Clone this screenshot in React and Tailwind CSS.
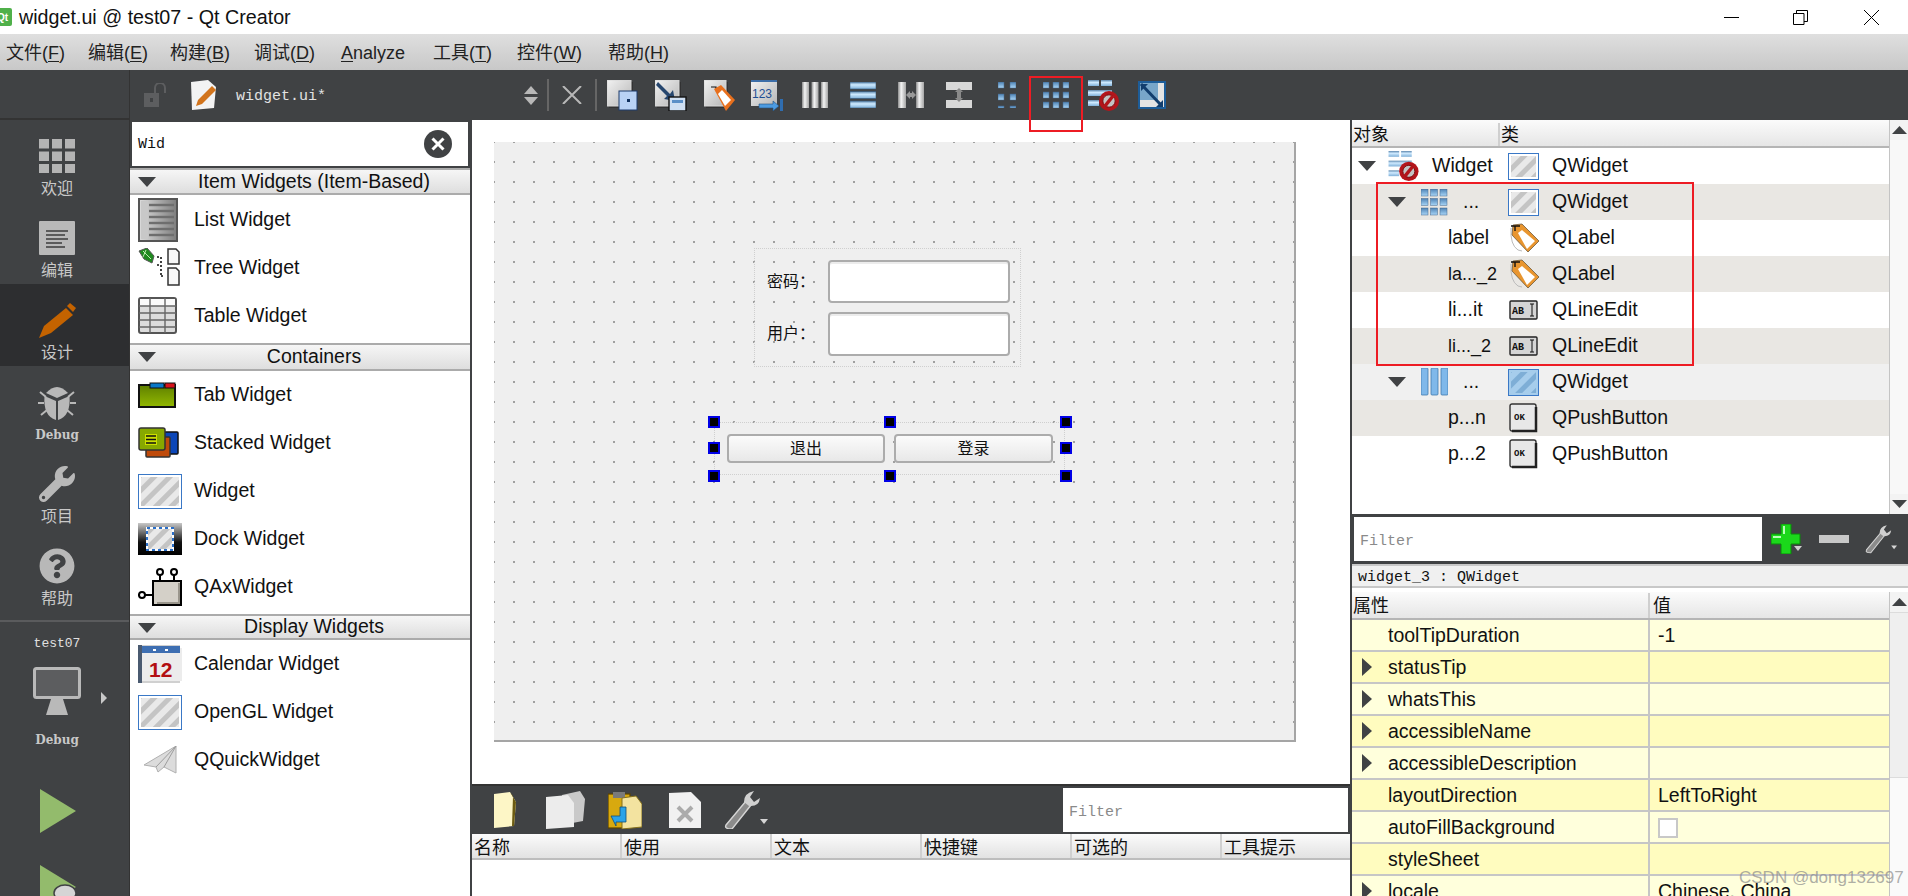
import React from "react";
import { FaWrench, FaQuestionCircle } from "react-icons/fa";

const SANS = "[font-family:'Liberation_Sans','Noto_Sans_CJK_SC',sans-serif]";

// shared gradients for the little toolbar pictures
const Defs = () => (
  <svg className="absolute h-0 w-0">
    <defs>
      <linearGradient id="barV" x1="0" x2="1" y1="0" y2="0">
        <stop offset="0" stopColor="#8d8d8d" />
        <stop offset="0.4" stopColor="#f4f4f4" />
        <stop offset="1" stopColor="#a5a5a5" />
      </linearGradient>
      <linearGradient id="barH" x1="0" x2="0" y1="0" y2="1">
        <stop offset="0" stopColor="#5d87ad" />
        <stop offset="0.4" stopColor="#cfeaff" />
        <stop offset="1" stopColor="#7fb0d8" />
      </linearGradient>
      <linearGradient id="tile" x1="0" x2="0" y1="0" y2="1">
        <stop offset="0" stopColor="#4f83b5" />
        <stop offset="1" stopColor="#a9d6f7" />
      </linearGradient>
      <linearGradient id="page" x1="0" x2="1" y1="0" y2="1">
        <stop offset="0" stopColor="#f2f2f2" />
        <stop offset="1" stopColor="#b5b5b5" />
      </linearGradient>
      <linearGradient id="greenG" x1="0" x2="0" y1="0" y2="1">
        <stop offset="0" stopColor="#5f8000" />
        <stop offset="1" stopColor="#92b800" />
      </linearGradient>
      <linearGradient id="listG" x1="0" x2="1" y1="0" y2="0">
        <stop offset="0" stopColor="#dcdcdc" />
        <stop offset="1" stopColor="#7d7d7d" />
      </linearGradient>
      <linearGradient id="dockG" x1="0" x2="0" y1="0" y2="1">
        <stop offset="0" stopColor="#c8c8c8" />
        <stop offset="0.6" stopColor="#111" />
        <stop offset="1" stopColor="#000" />
      </linearGradient>
      <pattern id="stripes" width="11" height="11" patternUnits="userSpaceOnUse" patternTransform="rotate(45)">
        <rect width="11" height="11" fill="#e9e9e9" />
        <rect width="5" height="11" fill="#c4c4c4" />
      </pattern>
      <pattern id="stripesBlue" width="11" height="11" patternUnits="userSpaceOnUse" patternTransform="rotate(45)">
        <rect width="11" height="11" fill="#a6cdec" />
        <rect width="5" height="11" fill="#7eaed6" />
      </pattern>
    </defs>
  </svg>
);

const Ico = ({ w, h, vb, children, className = "" }) => (
  <svg width={w} height={h} viewBox={vb || `0 0 ${w} ${h}`} className={`shrink-0 ${className}`}>
    {children}
  </svg>
);

// ---- left rail icons
const GridRail = () => (
  <Ico w={36} h={34}>
    {[0, 13, 26].map((x) =>
      [0, 12.5, 25].map((y) => <rect key={`${x}${y}`} x={x} y={y} width="10" height="9.5" fill="#b4b4b4" />)
    )}
  </Ico>
);
const EditRail = () => (
  <Ico w={36} h={34}>
    <rect width="36" height="34" rx="1" fill="#b9b9b9" />
    <path d="M7 10h22M7 14h19M7 18h22M7 22h16M7 26h19" stroke="#3c3c3c" strokeWidth="1.6" />
  </Ico>
);
const PencilRail = () => (
  <Ico w={37} h={35}>
    <path d="M0 35 L5 23 L27 5 L34 12 L12 30 Z" fill="#c46300" />
    <path d="M28 3 L31 0 L37 5 L34 9 Z" fill="#c46300" />
  </Ico>
);
const BugRail = () => (
  <Ico w={38} h={36}>
    <path d="M2 8l6 5M36 8l-6 5M0 19h6M38 19h-6M3 31l6-5M35 31l-6-5" stroke="#b8b8b8" strokeWidth="2" />
    <path d="M8 9 Q19 -3 30 9 L19 14 Z" fill="#b8b8b8" />
    <path d="M6.5 12 L18 17 V36 Q5 32 6.5 12 Z" fill="#b8b8b8" />
    <path d="M31.5 12 L20 17 V36 Q33 32 31.5 12 Z" fill="#b8b8b8" />
  </Ico>
);
const MonitorRail = () => (
  <Ico w={48} h={48}>
    <rect x="1.5" y="1.5" width="45" height="29" rx="2" fill="#5c5d5f" stroke="#b9b9b9" strokeWidth="3" />
    <path d="M18 32h12l5 16H13z" fill="#b9b9b9" />
  </Ico>
);

// ---- widget box icons
const ListIcon = () => (
  <Ico w={40} h={44}>
    <rect x="1" y="1" width="38" height="42" fill="url(#listG)" stroke="#555" strokeWidth="2" />
    <rect x="3" y="3" width="7" height="38" fill="#c8c8c8" />
    {[7, 13, 19, 25, 31, 37].map((y) => (
      <path key={y} d={`M11 ${y}h25`} stroke="#6e6e6e" strokeWidth="2.4" />
    ))}
  </Ico>
);
const TreeIcon = () => (
  <Ico w={44} h={40}>
    <path d="M1 3 L9 0 L16 8 L14 15 L6 11 Z" fill="#1f8a1f" stroke="#555" strokeWidth="1" />
    <path d="M5 3l8 8M8 2l-3 7" stroke="#bdeab0" strokeWidth="1" />
    <path d="M23 9v20M19 9h4M19 17h4M23 28h4" stroke="#111" strokeWidth="1.6" strokeDasharray="2 2" />
    <path d="M30 1h8l3 3v12H30z" fill="#f7f7f7" stroke="#333" strokeWidth="1.5" />
    <path d="M30 20h8l3 3v14H30z" fill="#f7f7f7" stroke="#333" strokeWidth="1.5" />
  </Ico>
);
const TableIcon = () => (
  <Ico w={40} h={38}>
    <rect x="1" y="1" width="37" height="35" rx="2" fill="#dcdcdc" stroke="#555" strokeWidth="2" />
    <rect x="2" y="2" width="35" height="7" fill="#fafafa" />
    <path d="M1 9h37M1 16h37M1 23h37M1 30h37M12 1v35M27 1v35" stroke="#666" strokeWidth="1.4" />
  </Ico>
);
const TabIcon = () => (
  <Ico w={39} h={26}>
    <rect x="1" y="3" width="36" height="22" fill="url(#greenG)" stroke="#111" strokeWidth="2" />
    <rect x="12" y="1" width="14" height="5" fill="#0a78c8" stroke="#111" strokeWidth="1" />
    <rect x="27" y="1" width="10" height="5" fill="#d8141c" stroke="#111" strokeWidth="1" />
  </Ico>
);
const StackedIcon = () => (
  <Ico w={42} h={32}>
    <rect x="26" y="5" width="14" height="22" rx="1" fill="#0b46b8" stroke="#111" strokeWidth="1.5" />
    <rect x="8" y="10" width="24" height="20" rx="1" fill="#bf4a0a" stroke="#333" strokeWidth="1.5" />
    <rect x="1" y="1" width="26" height="22" rx="2" fill="#87a800" stroke="#333" strokeWidth="1.5" />
    <rect x="7" y="7" width="12" height="11" fill="#cde000" />
    <path d="M8 9h10M8 12.5h10M8 16h10" stroke="#111" strokeWidth="1.4" />
  </Ico>
);
const WidgetIcon = ({ w = 44, h = 35, blue = false }) => (
  <Ico w={w} h={h}>
    <rect x="1" y="1" width={w - 2} height={h - 2} fill={blue ? "url(#stripesBlue)" : "url(#stripes)"} stroke="#3a78c6" strokeWidth="2" />
    <rect x="2" y="2" width={w - 4} height={h - 4} fill="none" stroke={blue ? "#a6cdec" : "#fff"} strokeWidth="2" />
  </Ico>
);
const DockIcon = () => (
  <Ico w={44} h={32}>
    <rect width="44" height="32" fill="url(#dockG)" />
    <rect x="9" y="5" width="26" height="22" fill="url(#stripes)" stroke="#fff" strokeWidth="2" />
    <rect x="9" y="5" width="26" height="22" fill="none" stroke="#2a6fc9" strokeWidth="2" strokeDasharray="3 3" />
  </Ico>
);
const QAxIcon = () => (
  <Ico w={44} h={38}>
    <rect x="15" y="13" width="28" height="24" fill="#d4d0c8" stroke="#000" strokeWidth="2" />
    <path d="M41 15v20H19" stroke="#9a968c" strokeWidth="2" fill="none" />
    <path d="M22 5v8M36 5v8M0 27h15" stroke="#000" strokeWidth="2" />
    <circle cx="22" cy="4" r="3" fill="#fff" stroke="#000" strokeWidth="2" />
    <circle cx="36" cy="4" r="3" fill="#fff" stroke="#000" strokeWidth="2" />
    <circle cx="4" cy="27" r="3" fill="#fff" stroke="#000" strokeWidth="2" />
  </Ico>
);
const CalendarIcon = () => (
  <Ico w={44} h={38}>
    <rect x="0" y="0" width="42" height="38" fill="#d0d0d0" />
    <rect x="4" y="3" width="40" height="33" fill="#ececec" />
    <rect x="0" y="0" width="4" height="38" fill="#4a5a70" />
    <rect x="4" y="1" width="38" height="7" fill="#3e6fb2" />
    <path d="M15 5h3M27 5h3" stroke="#fff" strokeWidth="2" />
    <text x="11" y="32" fontSize="21" fontWeight="700" fill="#b30f12" fontFamily="Liberation Sans">12</text>
  </Ico>
);
const PlaneIcon = () => (
  <Ico w={34} h={28} className="ml-[6px]">
    <path d="M0 19 L32 0 L32 27 L20 21 L14 26 L12 21 Z" fill="#dcdcdc" stroke="#b0b0b0" strokeWidth="1" />
    <path d="M32 0 L12 21 M32 0 L20 21" stroke="#9c9c9c" strokeWidth="1" />
  </Ico>
);

// ---- designer toolbar icons
const PageBack = ({ w = 24, h = 26 }) => (
  <>
    <rect x="2" y="2" width={w} height={h} fill="#2c2c2c" opacity="0.7" />
    <rect x="0" y="0" width={w} height={h} fill="url(#page)" stroke="#d8d8d8" strokeWidth="1" />
  </>
);
const ToolEditWidgets = () => (
  <Ico w={32} h={31}>
    <PageBack />
    <rect x="12" y="11" width="18" height="19" fill="#b9d2f5" stroke="#1d3a6b" strokeWidth="1" />
    <rect x="20" y="19" width="3" height="3" fill="#10315f" />
  </Ico>
);
const ToolSignals = () => (
  <Ico w={32} h={31}>
    <PageBack />
    <path d="M3 2 L15 14 L18 10 L20 21 L9 19 L12 16 L1 5 Z" fill="#26466e" />
    <rect x="14" y="17" width="17" height="14" fill="#cfdff2" stroke="#111" strokeWidth="1.4" />
    <rect x="17" y="20" width="11" height="3" fill="#5b8fc7" />
  </Ico>
);
const ToolBuddies = () => (
  <Ico w={31} h={31}>
    <PageBack w={22} />
    <path d="M7 7h5v3" stroke="#111" strokeWidth="1.2" fill="none" />
    <path d="M10 9 L17 5 L31 20 L22 31 Z" fill="#e8701d" />
    <path d="M14 14 L18 10 L27 20 L21 26 Z" fill="#fff" />
  </Ico>
);
const ToolTabOrder = () => (
  <Ico w={32} h={31}>
    <rect x="0" y="0" width="26" height="26" fill="url(#page)" />
    <rect x="0" y="0" width="26" height="2" fill="#3d6ea8" />
    <text x="1" y="18" fontSize="12" fill="#1f4f94" fontFamily="Liberation Sans">123</text>
    <path d="M8 24h14v-3l6 5-6 5v-3H8z" fill="#4d9be0" stroke="#22517f" strokeWidth="0.6" />
    <rect x="29" y="19" width="3" height="12" fill="#2f6db0" />
  </Ico>
);
const ToolHBox = () => (
  <Ico w={26} h={26}>
    {[0, 9.5, 19].map((x) => <rect key={x} x={x} y="0" width="7" height="26" fill="url(#barV)" />)}
  </Ico>
);
const ToolVBox = () => (
  <Ico w={26} h={26}>
    {[0, 9.5, 19].map((y) => <rect key={y} x="0" y={y} width="26" height="7" fill="url(#barH)" stroke="#35577a" strokeWidth="0.6" />)}
  </Ico>
);
const ToolHSplit = () => (
  <Ico w={26} h={26}>
    <rect x="0" width="8" height="26" fill="url(#barV)" />
    <rect x="18" width="8" height="26" fill="url(#barV)" />
    <path d="M8 13l4-4v2h2V9l4 4-4 4v-2h-2v2z" fill="#999" />
  </Ico>
);
const ToolVSplit = () => (
  <Ico w={26} h={26}>
    <rect y="0" width="26" height="8" fill="#d8d8d8" />
    <rect y="18" width="26" height="8" fill="#d8d8d8" />
    <path d="M13 6l4 4h-2v6h2l-4 4-4-4h2v-6H9z" fill="#8a8a8a" />
  </Ico>
);
const Tiles = ({ cols, rows, size = 6, gap = 3, w, h }) => (
  <Ico w={w} h={h}>
    {Array.from({ length: rows }).flatMap((_, r) =>
      Array.from({ length: cols }).map((_, c) => (
        <rect key={`${r}-${c}`} x={c * (size + gap)} y={r * (size + gap)} width={size} height={size} fill="url(#tile)" stroke="#46678c" strokeWidth="0.5" />
      ))
    )}
  </Ico>
);
const NoSign = ({ cx, cy, r }) => (
  <>
    <circle cx={cx} cy={cy} r={r} fill="#b3151b" />
    <circle cx={cx} cy={cy} r={r * 0.62} fill="#c4c4c4" stroke="#7a0d10" strokeWidth="1" />
    <path d={`M${cx - r * 0.4} ${cy + r * 0.5} L${cx + r * 0.4} ${cy - r * 0.5}`} stroke="#b3151b" strokeWidth={r * 0.35} />
  </>
);
const ToolBreak = ({ w = 32, h = 31 }) => (
  <Ico w={w} h={h} vb="0 0 32 31">
    <rect x="0" y="0" width="11" height="6" fill="url(#barH)" />
    <rect x="13" y="0" width="11" height="6" fill="url(#barH)" />
    <rect x="0" y="10" width="24" height="6" fill="url(#barH)" />
    <rect x="0" y="20" width="11" height="6" fill="url(#barH)" />
    <NoSign cx={21} cy={21} r={10} />
  </Ico>
);
const ToolAdjust = () => (
  <Ico w={28} h={29}>
    <rect x="1" y="1" width="26" height="26" fill="#e4e4e4" stroke="#1d5d99" strokeWidth="2" />
    <rect x="2" y="2" width="18" height="17" fill="#78a6c9" />
    <path d="M3 3l20 21" stroke="#123e6e" strokeWidth="3" />
    <path d="M3 3h7L3 10zM25 26h-7l7-7z" fill="#123e6e" />
  </Ico>
);
const LockIcon = () => (
  <Ico w={24} h={24}>
    <rect x="0" y="10" width="15" height="14" fill="#5d5e60" />
    <rect x="6" y="15" width="3" height="4" fill="#404244" />
    <path d="M11 10V5a5 5 0 0 1 10 0v5" fill="none" stroke="#5d5e60" strokeWidth="2" />
  </Ico>
);
const FileEditIcon = () => (
  <Ico w={27} h={30}>
    <path d="M0 2 L17 0 L25 7 L23 28 L1 30 Z" fill="#f3f3f3" />
    <path d="M5 26 L7 20 L21 6 L25 10 L11 24 Z" fill="#d2741c" />
  </Ico>
);

// ---- tree icons
const LayoutGridSmall = () => <Tiles cols={3} rows={3} size={7} gap={2.5} w={27} h={27} />;
const LayoutBars = () => (
  <Ico w={27} h={28}>
    {[0, 10, 20].map((x) => <rect key={x} x={x} y="0" width="7" height="27" rx="1" fill="#7fb8ea" stroke="#3f78ad" strokeWidth="0.8" />)}
  </Ico>
);
const TagIcon = () => (
  <Ico w={31} h={30}>
    <path d="M3 5 Q2 22 10 27 L14 28" fill="none" stroke="#bbb" strokeWidth="1" />
    <path d="M5 2 L14 1 L31 18 L20 29 L4 12 Z" fill="#e8952f" stroke="#6c5a3f" strokeWidth="0.8" />
    <path d="M10 10 L14 7 L27 18 L19 26 Z" fill="#fff" />
    <path d="M3 3h9M7 3v5" stroke="#111" strokeWidth="1.4" />
  </Ico>
);
const LineEditIcon = () => (
  <Ico w={29} h={20}>
    <rect x="1" y="1" width="27" height="18" rx="1" fill="#d5d5d5" stroke="#222" strokeWidth="1.4" />
    <text x="3" y="14" fontSize="10" fontWeight="700" fill="#111" fontFamily="Liberation Mono">AB</text>
    <path d="M21 4h4M23 4v12M21 16h4" stroke="#111" strokeWidth="1" />
  </Ico>
);
const ButtonIcon = () => (
  <Ico w={29} h={30}>
    <rect x="1" y="1" width="26" height="27" rx="2" fill="#e8e8e8" stroke="#333" strokeWidth="1.4" />
    <path d="M27 4v24H3" stroke="#222" strokeWidth="2.5" fill="none" />
    <text x="5" y="17" fontSize="9" fontWeight="700" fill="#111" fontFamily="Liberation Mono">OK</text>
  </Ico>
);

// ---- action editor icons
const NewPage = () => (
  <Ico w={22} h={36}>
    <path d="M0 2 L16 0 L22 10 L20 34 L0 36 Z" fill="#fdf6c6" />
    <path d="M16 0 L22 10 L20 34 L18 34 L19 4 Z" fill="#6b5a10" />
  </Ico>
);
const CopyPages = () => (
  <Ico w={39} h={38}>
    <path d="M16 4 L34 0 L39 8 L37 30 L16 34 Z" fill="#c9c9c9" />
    <path d="M0 6 L22 4 L28 12 L28 36 L0 38 Z" fill="#ececec" />
  </Ico>
);
const PastePage = () => (
  <Ico w={34} h={37}>
    <rect x="0" y="2" width="22" height="34" fill="#d8a90f" stroke="#5b4300" strokeWidth="1.2" />
    <rect x="5" y="0" width="12" height="6" fill="#7a7a7a" />
    <path d="M14 6 L28 4 L34 12 L34 35 L14 37 Z" fill="#f3e3a0" stroke="#85701d" strokeWidth="1" />
    <path d="M3 24h9v-9h6v15H8v4z" fill="#2aa3e8" stroke="#0f4e7a" strokeWidth="0.8" />
  </Ico>
);
const DeletePage = () => (
  <Ico w={32} h={36}>
    <path d="M0 1 L22 0 L32 10 L32 36 L0 36 Z" fill="#f1f1f1" />
    <path d="M9 15l14 14M23 15L9 29" stroke="#ababab" strokeWidth="4" />
  </Ico>
);
const ToolWrench = ({ w = 44, h = 38 }) => (
  <Ico w={w} h={h} vb="0 0 44 38">
    <path d="M2 34 L22 10 L27 14 L8 38 Q0 38 2 34Z" fill="#8b8b8b" stroke="#d5d5d5" strokeWidth="1.4" />
    <path d="M20 11 Q20 2 30 0 L26 6 L30 11 L36 7 Q35 16 25 15Z" fill="#d0d0d0" />
    <path d="M36 28h8l-4 5z" fill="#d5d5d5" />
  </Ico>
);
const PlusIcon = () => (
  <Ico w={31} h={30}>
    <path d="M10 0h10v10h9v10h-9v10H10V20H0V10h10z" fill="#1bd81b" stroke="#0a8a0a" strokeWidth="1" />
    <path d="M12 2h2v8h-2zM2 12h8v2H2z" fill="#b8ffb8" />
    <path d="M23 22h8l-4 5z" fill="#cfcfcf" />
  </Ico>
);

const ArrowDown = ({ className = "" }) => (
  <Ico w={18} h={10} className={className}>
    <path d="M0 0h18L9 10z" fill="#404244" />
  </Ico>
);
const ArrowRight = () => (
  <Ico w={10} h={18}>
    <path d="M0 0l10 9-10 9z" fill="#404244" />
  </Ico>
);

const menus = [
  { a: "文件(", b: "F", c: ")", w: "w-[82px]" },
  { a: "编辑(", b: "E", c: ")", w: "w-[82px]" },
  { a: "构建(", b: "B", c: ")", w: "w-[84px]" },
  { a: "调试(", b: "D", c: ")", w: "w-[87px]" },
  { a: "", b: "A", c: "nalyze", w: "w-[92px]" },
  { a: "工具(", b: "T", c: ")", w: "w-[84px]" },
  { a: "控件(", b: "W", c: ")", w: "w-[91px]" },
  { a: "帮助(", b: "H", c: ")", w: "w-[82px]" },
];

const railItems = [
  { icon: <GridRail />, label: "欢迎" },
  { icon: <EditRail />, label: "编辑" },
  { icon: <PencilRail />, label: "设计", active: true },
  { icon: <BugRail />, label: "Debug", latin: true },
  { icon: <FaWrench className="h-[36px] w-[38px] text-[#b8b8b8]" />, label: "项目" },
  { icon: <FaQuestionCircle className="h-[36px] w-[38px] text-[#b8b8b8]" />, label: "帮助" },
];

const boxSections = [
  {
    title: "Item Widgets (Item-Based)",
    head: "h-[27px]",
    pad: "pt-[1px] pb-[3px]",
    items: [
      ["List Widget", <ListIcon />],
      ["Tree Widget", <TreeIcon />],
      ["Table Widget", <TableIcon />],
    ],
  },
  {
    title: "Containers",
    head: "h-[28px]",
    pad: "pb-[3px]",
    items: [
      ["Tab Widget", <TabIcon />],
      ["Stacked Widget", <StackedIcon />],
      ["Widget", <WidgetIcon />],
      ["Dock Widget", <DockIcon />],
      ["QAxWidget", <QAxIcon />],
    ],
  },
  {
    title: "Display Widgets",
    head: "h-[26px]",
    pad: "pb-[2px]",
    items: [
      ["Calendar Widget", <CalendarIcon />],
      ["OpenGL Widget", <WidgetIcon />],
      ["QQuickWidget", <PlaneIcon />],
    ],
  },
];

const treeRows = [
  { arrow: 6, icon: <ToolBreak w={32} h={30} />, name: "Widget", cls: <WidgetIcon w={31} h={27} />, type: "QWidget" },
  { alt: true, arrow: 36, icon: <LayoutGridSmall />, name: "...", dots: true, cls: <WidgetIcon w={31} h={27} />, type: "QWidget" },
  { name: "label", left: 96, cls: <TagIcon />, type: "QLabel" },
  { alt: true, name: "la..._2", left: 96, narrow: true, cls: <TagIcon />, type: "QLabel" },
  { name: "li...it", left: 96, cls: <LineEditIcon />, type: "QLineEdit" },
  { alt: true, name: "li..._2", left: 96, narrow: true, cls: <LineEditIcon />, type: "QLineEdit" },
  { sel: true, arrow: 36, icon: <LayoutBars />, name: "...", dots: true, cls: <WidgetIcon w={31} h={27} blue />, type: "QWidget" },
  { alt: true, name: "p...n", left: 96, cls: <ButtonIcon />, type: "QPushButton" },
  { name: "p...2", left: 96, cls: <ButtonIcon />, type: "QPushButton" },
];

const props = [
  { name: "toolTipDuration", value: "-1" },
  { name: "statusTip", arrow: true, strong: true },
  { name: "whatsThis", arrow: true },
  { name: "accessibleName", arrow: true, strong: true },
  { name: "accessibleDescription", arrow: true },
  { name: "layoutDirection", value: "LeftToRight", strong: true },
  { name: "autoFillBackground", check: true },
  { name: "styleSheet", strong: true },
  { name: "locale", arrow: true, value: "Chinese, China" },
];

const actionCols = ["名称", "使用", "文本", "快捷键", "可选的", "工具提示"];

const Handle = ({ x, y }) => (
  <div className="absolute h-[12px] w-[12px] border-[2px] border-[#0000e6] bg-black" style={{ left: x, top: y }} />
);

const ScrollBtn = ({ down }) => (
  <div className="flex h-[20px] items-center justify-center bg-[#f3f3f3]">
    <svg width="15" height="8" viewBox="0 0 15 8">
      <path d={down ? "M0 0h15L7.5 8z" : "M7.5 0L15 8H0z"} fill="#404244" />
    </svg>
  </div>
);

export default function App() {
  return (
    <div className={`relative flex h-[896px] w-[1908px] flex-col overflow-hidden bg-white text-[#111] ${SANS}`}>
      <Defs />

      {/* title bar */}
      <div className="flex h-[34px] items-center bg-white">
        <div className="flex h-[18px] w-[12px] items-center overflow-hidden rounded-r-[2px] bg-[#4fb04a] text-[10px] font-bold text-white">
          <span className="-ml-[3px]">Qt</span>
        </div>
        <span className="ml-[7px] pt-[2px] text-[19.7px] leading-none">widget.ui @ test07 - Qt Creator</span>
        <div className="ml-auto flex items-center">
          <svg width="15" height="15" viewBox="0 0 15 15" className="mr-[54px]">
            <path d="M0 7.5h15" stroke="#000" strokeWidth="1" />
          </svg>
          <svg width="15" height="15" viewBox="0 0 15 15" className="mr-[56px]">
            <path d="M0.5 3.5h10.5v11H0.5zM3.5 3.5V0.5h11v11H11" fill="none" stroke="#000" strokeWidth="1" />
          </svg>
          <svg width="15" height="15" viewBox="0 0 15 15" className="mr-[29px]">
            <path d="M0 0l15 15M15 0L0 15" stroke="#000" strokeWidth="1" />
          </svg>
        </div>
      </div>

      {/* menu bar */}
      <div className="flex h-[36px] items-center bg-gradient-to-b from-[#dfdfdf] to-[#c8c8c8] pl-[6px] pt-[2px] text-[18px]">
        {menus.map((m) => (
          <span key={m.b} className={`${m.w} leading-none text-[#222]`}>
            {m.a}
            <span className="underline underline-offset-2">{m.b}</span>
            {m.c}
          </span>
        ))}
      </div>

      <div className="flex min-h-0 flex-1 bg-[#404244]">
        {/* mode rail */}
        <div className="flex w-[130px] shrink-0 flex-col items-stretch border-r border-[#333] text-[#c8c8c8]">
          <div className="h-[50px] shrink-0 border-b-[2px] border-[#333]" />
          {railItems.map((it) => (
            <div key={it.label} className={`flex h-[82px] shrink-0 flex-col items-center pr-[15px] pt-[18px] ${it.active ? "bg-[#2d2e30]" : ""}`}>
              <div className="flex h-[36px] items-center">{it.icon}</div>
              <span className={it.latin ? "mt-[5px] text-[12px] font-bold leading-[20px] [font-family:'DejaVu_Serif',serif]" : "mt-[5px] text-[16px] leading-[20px]"}>
                {it.label}
              </span>
            </div>
          ))}
          <div className="mt-[8px] h-[2px] shrink-0 bg-[#5a5b5d]" />
          <div className="mt-[14px] pr-[15px] text-center text-[13px] leading-[16px] text-[#e0e0e0] [font-family:'Liberation_Mono',monospace]">test07</div>
          <div className="relative mt-[15px] flex justify-center pr-[15px]">
            <MonitorRail />
            <svg width="6" height="12" viewBox="0 0 6 12" className="absolute left-[101px] top-[25px]">
              <path d="M0 0l6 6-6 6z" fill="#c8c8c8" />
            </svg>
          </div>
          <div className="mt-[15px] pr-[15px] text-center text-[12px] font-bold leading-[20px] [font-family:'DejaVu_Serif',serif]">Debug</div>
          <div className="ml-[40px] mt-[39px]">
            <svg width="36" height="44" viewBox="0 0 36 44">
              <path d="M0 0l36 22L0 44z" fill="#93bb6c" />
            </svg>
          </div>
          <div className="relative ml-[40px] mt-[32px]">
            <svg width="36" height="44" viewBox="0 0 36 44">
              <path d="M0 0l36 22L0 44z" fill="#93bb6c" />
            </svg>
            <svg width="26" height="14" viewBox="0 0 26 14" className="absolute left-[12px] top-[19px]">
              <ellipse cx="13" cy="9" rx="11" ry="8" fill="#d5d5d5" stroke="#404244" strokeWidth="1.5" />
            </svg>
          </div>
        </div>

        <div className="relative flex min-w-0 flex-1 flex-col">
          {/* designer toolbar */}
          <div className="flex h-[50px] shrink-0 items-center">
            <div className="ml-[14px]"><LockIcon /></div>
            <div className="ml-[23px]"><FileEditIcon /></div>
            <span className="ml-[18px] pt-[3px] text-[15px] leading-none text-[#e2e2e2] [font-family:'Liberation_Mono',monospace]">widget.ui*</span>
            <svg width="14" height="19" viewBox="0 0 14 19" className="ml-[198px]">
              <path d="M7 0l7 8H0zM0 11h14l-7 8z" fill="#b8b8b8" />
            </svg>
            <div className="ml-[9px] h-[32px] w-[2px] bg-[#666]" />
            <svg width="20" height="18" viewBox="0 0 20 18" className="ml-[13px]">
              <path d="M1 0l18 18M19 0L1 18" stroke="#b8b8b8" strokeWidth="2" />
            </svg>
            <div className="ml-[13px] h-[32px] w-[2px] bg-[#666]" />
            <div className="ml-[10px]"><ToolEditWidgets /></div>
            <div className="ml-[16px]"><ToolSignals /></div>
            <div className="ml-[17px]"><ToolBuddies /></div>
            <div className="ml-[16px]"><ToolTabOrder /></div>
            <div className="ml-[19px]"><ToolHBox /></div>
            <div className="ml-[22px]"><ToolVBox /></div>
            <div className="ml-[22px]"><ToolHSplit /></div>
            <div className="ml-[22px]"><ToolVSplit /></div>
            <div className="ml-[26px]"><Tiles cols={2} rows={3} size={6} gap={6} w={18} h={26} /></div>
            <div className="ml-[27px]"><Tiles cols={3} rows={3} size={6} gap={4} w={26} h={26} /></div>
            <div className="ml-[19px]"><ToolBreak /></div>
            <div className="ml-[18px]"><ToolAdjust /></div>
          </div>
          {/* red mark drawn on top of the screenshot */}
          <div className="absolute left-[899px] top-[6px] z-10 h-[56px] w-[54px] border-[2px] border-[#ed1c24]" />

          <div className="flex min-h-0 flex-1">
            {/* widget box */}
            <div className="flex w-[342px] shrink-0 flex-col border-r-[2px] border-[#404244]">
              <div className="mx-[2px] mt-[2px] flex h-[44px] shrink-0 items-center bg-white pl-[6px] pr-[16px]">
                <span className="pt-[3px] text-[15px] [font-family:'Liberation_Mono',monospace]">Wid</span>
                <div className="ml-auto flex h-[28px] w-[28px] items-center justify-center rounded-full bg-[#404244]">
                  <svg width="14" height="14" viewBox="0 0 14 14">
                    <path d="M1.5 1.5l11 11M12.5 1.5l-11 11" stroke="#fff" strokeWidth="3" />
                  </svg>
                </div>
              </div>
              <div className="mt-[2px] min-h-0 flex-1 bg-white">
                {boxSections.map((s) => (
                  <div key={s.title}>
                    <div className={`relative flex ${s.head} items-center justify-center border-y-[2px] border-[#ababab] bg-gradient-to-b from-[#f6f6f6] to-[#dedede] pl-[28px]`}>
                      <ArrowDown className="absolute left-[8px] top-[7px]" />
                      <span className="text-[19.5px] leading-none">{s.title}</span>
                    </div>
                    <div className={s.pad}>
                      {s.items.map(([name, icon]) => (
                        <div key={name} className="flex h-[48px] items-center">
                          <div className="flex h-[48px] w-[64px] shrink-0 items-center pl-[8px]">{icon}</div>
                          <span className="text-[19.5px] leading-none">{name}</span>
                        </div>
                      ))}
                    </div>
                  </div>
                ))}
              </div>
            </div>

            {/* form canvas + action editor */}
            <div className="flex min-w-0 flex-1 flex-col">
              <div className="min-h-0 flex-1 bg-white pl-[22px] pt-[22px]">
                <div className="relative h-[600px] w-[802px] border-b-[2px] border-r-[2px] border-[#a5a5a5] bg-[#efefef] bg-[radial-gradient(circle_at_1px_1px,#a0a0a0_1.3px,transparent_1.4px)] bg-[length:20px_20px] bg-[position:-1px_-1px]">
                  <div className="absolute left-[260px] top-[106px] h-[119px] w-[267px] border border-dotted border-[#cfcfcf]" />
                  <span className="absolute left-[273px] top-[129px] text-[16px] leading-[22px]">密码：</span>
                  <span className="absolute left-[273px] top-[181px] text-[16px] leading-[22px]">用户：</span>
                  <div className="absolute left-[334px] top-[118px] h-[43px] w-[182px] rounded-[4px] border-[2px] border-[#acacac] bg-white shadow-[inset_0_2px_0_#ececec]" />
                  <div className="absolute left-[334px] top-[170px] h-[44px] w-[182px] rounded-[4px] border-[2px] border-[#acacac] bg-white shadow-[inset_0_2px_0_#ececec]" />
                  <div className="absolute left-[220px] top-[280px] h-[53px] w-[351px] border border-dotted border-[#cfcfcf]" />
                  <div className="absolute left-[233px] top-[292px] flex h-[29px] w-[158px] items-center justify-center rounded-[4px] border-[2px] border-[#acacac] bg-gradient-to-b from-[#fbfbfb] to-[#e8e8e8] text-[16px]">退出</div>
                  <div className="absolute left-[400px] top-[292px] flex h-[29px] w-[159px] items-center justify-center rounded-[4px] border-[2px] border-[#acacac] bg-gradient-to-b from-[#fbfbfb] to-[#e8e8e8] text-[16px]">登录</div>
                  <Handle x={214} y={274} />
                  <Handle x={390} y={274} />
                  <Handle x={566} y={274} />
                  <Handle x={214} y={300} />
                  <Handle x={566} y={300} />
                  <Handle x={214} y={328} />
                  <Handle x={390} y={328} />
                  <Handle x={566} y={328} />
                </div>
              </div>

              <div className="flex h-[50px] shrink-0 items-center border-t-[2px] border-[#333] bg-[#404244]">
                <div className="ml-[22px]"><NewPage /></div>
                <div className="ml-[30px]"><CopyPages /></div>
                <div className="ml-[23px]"><PastePage /></div>
                <div className="ml-[27px]"><DeletePage /></div>
                <div className="ml-[23px]"><ToolWrench /></div>
                <div className="ml-auto mr-[2px] flex h-[44px] w-[285px] items-center bg-white pl-[6px] pt-[6px] text-[15px] text-[#8a8a8a] [font-family:'Liberation_Mono',monospace]">Filter</div>
              </div>
              <div className="flex h-[26px] shrink-0 overflow-hidden border-b-[2px] border-[#bdbdbd] bg-gradient-to-b from-[#fbfbfb] to-[#e2e2e2]">
                {actionCols.map((c) => (
                  <div key={c} className="flex w-[150px] shrink-0 items-center border-r-[2px] border-[#d0d0d0] pl-[2px] pt-[4px] text-[18px] leading-none">{c}</div>
                ))}
              </div>
              <div className="h-[36px] shrink-0 bg-white" />
            </div>

            {/* right panes */}
            <div className="flex w-[558px] shrink-0 flex-col border-l-[2px] border-[#404244]">
              <div className="relative flex h-[394px] shrink-0 bg-white">
                <div className="min-w-0 flex-1">
                  <div className="flex h-[28px] border-b-[2px] border-[#b5b5b5] bg-gradient-to-b from-[#fbfbfb] to-[#e6e6e6] pt-[3px] text-[18px] leading-none">
                    <div className="flex w-[148px] items-center border-r-[2px] border-[#cfcfcf] pl-[1px]">对象</div>
                    <div className="flex items-center pl-[1px]">类</div>
                  </div>
                  {treeRows.map((r, i) => (
                    <div key={i} className={`flex h-[36px] items-center ${r.alt ? "bg-[#e9e7e3]" : r.sel ? "bg-[#f0f0f0]" : "bg-white"}`}>
                      <div className="flex w-[156px] shrink-0 items-center" style={{ paddingLeft: r.left ?? r.arrow }}>
                        {r.arrow !== undefined && <ArrowDown />}
                        {r.icon && <div className={`${r.dots ? "ml-[15px]" : "ml-[12px]"} flex items-center`}>{r.icon}</div>}
                        <span className={`leading-none ${r.narrow ? "text-[18px]" : "text-[19.5px]"} ${r.icon ? (r.dots ? "ml-[15px]" : "ml-[12px]") : ""}`}>{r.name}</span>
                      </div>
                      <div className="flex w-[31px] shrink-0 items-center justify-center">{r.cls}</div>
                      <span className="ml-[13px] text-[19.5px] leading-none">{r.type}</span>
                    </div>
                  ))}
                </div>
                <div className="flex w-[19px] shrink-0 flex-col justify-between border-l border-[#c4c4c4] bg-[#f8f8f8]">
                  <ScrollBtn />
                  <ScrollBtn down />
                </div>
                <div className="absolute left-[24px] top-[62px] h-[184px] w-[318px] border-[2px] border-[#ed1c24]" />
              </div>

              <div className="flex h-[50px] shrink-0 items-center bg-[#404244]">
                <div className="ml-[2px] flex h-[44px] w-[408px] items-center bg-white pl-[6px] pt-[6px] text-[15px] text-[#8a8a8a] [font-family:'Liberation_Mono',monospace]">Filter</div>
                <div className="ml-[9px]"><PlusIcon /></div>
                <div className="ml-[17px] h-[8px] w-[30px] bg-[#c8c8c8]" />
                <div className="ml-[16px]"><ToolWrench w={32} h={30} /></div>
              </div>
              <div className="flex h-[24px] shrink-0 items-center border-y-[2px] border-[#c8c8c8] bg-[#f0f0f0] pl-[6px] pt-[3px] text-[15px] leading-none [font-family:'Liberation_Mono',monospace]">
                widget_3 : QWidget
              </div>
              <div className="flex min-h-0 flex-1 bg-white pt-[4px]">
                <div className="min-w-0 flex-1">
                  <div className="flex h-[28px] border-b-[2px] border-[#b5b5b5] bg-gradient-to-b from-[#fbfbfb] to-[#e6e6e6] pt-[1px] text-[18px] leading-none">
                    <div className="flex w-[298px] items-center border-r-[2px] border-[#cfcfcf] pl-[1px]">属性</div>
                    <div className="flex items-center pl-[3px]">值</div>
                  </div>
                  {props.map((p) => (
                    <div key={p.name} className={`flex h-[32px] shrink-0 border-b-[2px] border-[#c6c6c6] ${p.strong ? "bg-[#fffcbf]" : "bg-[#ffffdc]"}`}>
                      <div className="flex w-[298px] shrink-0 items-center border-r-[2px] border-[#c6c6c6]">
                        <div className="flex w-[36px] shrink-0 justify-start pl-[10px]">{p.arrow && <ArrowRight />}</div>
                        <span className="pt-[2px] text-[19.5px] leading-none">{p.name}</span>
                      </div>
                      <div className="flex items-center pl-[8px] pt-[2px] text-[19.5px] leading-none">
                        {p.value}
                        {p.check && <div className="h-[20px] w-[20px] border-[2px] border-[#c8c8c8] bg-white" />}
                      </div>
                    </div>
                  ))}
                </div>
                <div className="flex w-[19px] shrink-0 flex-col border-l border-[#c4c4c4] bg-[#fafafa]">
                  <ScrollBtn />
                  <div className="h-[166px] border-y border-[#dcdcdc] bg-[#efefef]" />
                </div>
              </div>
            </div>
          </div>
        </div>
      </div>

      {/* csdn watermark */}
      <div className="absolute left-[1739px] top-[868px] text-[17px] leading-[20px] text-[#8b8b8b]/70">CSDN @dong132697</div>
    </div>
  );
}
